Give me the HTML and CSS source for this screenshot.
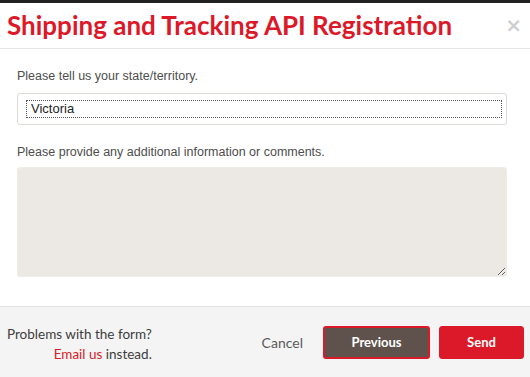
FILE: index.html
```html
<!DOCTYPE html>
<html lang="en">
<head>
    <meta charset="UTF-8">
    <meta name="viewport" content="width=device-width, initial-scale=1.0">
    <title>Shipping and Tracking API Registration</title>
    <link rel="stylesheet" href="styles.css">
</head>
<body>
    <div class="modal">
        <!-- Nagłówek okna -->
        <header class="modal-header">
            <h1 class="modal-title">Shipping and Tracking API Registration</h1>
            <span class="modal-close">&times;</span>
        </header>

        <!-- Formularz -->
        <form class="modal-body">
            <label class="field-label" for="state">Please tell us your state/territory.</label>
            <div class="field-input">
                <span class="field-value">Victoria</span>
            </div>

            <label class="field-label" for="comments">Please provide any additional information or comments.</label>
            <textarea class="field-textarea" id="comments"></textarea>
        </form>

        <!-- Stopka z przyciskami -->
        <footer class="modal-footer">
            <div class="help-text">
                <p>Problems with the form?</p>
                <p><a href="#" class="help-link">Email us</a> instead.</p>
            </div>
            <div class="actions">
                <a href="#" class="btn-cancel">Cancel</a>
                <button type="button" class="btn btn-previous">Previous</button>
                <button type="button" class="btn btn-send">Send</button>
            </div>
        </footer>
    </div>
</body>
</html>
```

FILE: styles.css
```css
:root {
    --ap-red: #dc1928;
    --ap-brown: #5f524d;
    --ap-text: #4d4d4d;
    --ap-sand: #ece9e4;
}

* {
    margin: 0;
    padding: 0;
    box-sizing: border-box;
}

body {
    font-family: "Liberation Sans", Arial, sans-serif;
    background: #222;
    padding-top: 3px;
    height: 100vh;
    overflow: hidden;
}

.modal {
    background: #fff;
    height: 374px;
    display: flex;
    flex-direction: column;
}

/* Nagłówek */
.modal-header {
    height: 46px;
    border-bottom: 1px solid #e5e5e5;
    display: flex;
    align-items: center;
    justify-content: space-between;
    padding: 0 8px 2px 7px;
}

.modal-title {
    font-family: Lato, "Open Sans", sans-serif;
    font-weight: 700;
    font-size: 26px;
    color: var(--ap-red);
}

.modal-close {
    font-family: "DejaVu Sans", sans-serif;
    font-size: 20px;
    font-weight: 700;
    color: #cfcfcf;
    line-height: 1;
}

/* Formularz */
.modal-body {
    flex: 1;
    padding: 20px 23px 0 17px;
    display: flex;
    flex-direction: column;
}

.field-label {
    font-size: 12.5px;
    color: var(--ap-text);
    margin-bottom: 10px;
}

.field-input {
    height: 32px;
    border: 1px solid #dedad5;
    border-radius: 3px;
    padding: 6px 4px 6px 8px;
    margin-bottom: 20px;
}

.field-value {
    display: block;
    height: 18px;
    border: 1px dotted #555;
    padding-left: 4px;
    font-size: 13px;
    line-height: 16px;
    color: #222;
}

.field-textarea {
    height: 110px;
    margin-top: -2px;
    background: var(--ap-sand);
    border: 1px solid #efece8;
    border-radius: 3px;
    resize: vertical;
    font-family: inherit;
}

/* Stopka */
.modal-footer {
    height: 71px;
    background: #f4f4f4;
    border-top: 1px solid #e2e2e2;
    display: flex;
    align-items: center;
    justify-content: space-between;
    padding: 0 6px 0 7px;
    font-family: Lato, "Open Sans", sans-serif;
}

.help-text {
    font-size: 13.5px;
    color: #3d3d3d;
    text-align: right;
    line-height: 20px;
    margin-top: 4px;
}

.help-link {
    color: var(--ap-red);
    text-decoration: none;
}

.actions {
    display: flex;
    align-items: center;
    gap: 9px;
}

.btn-cancel {
    font-size: 14px;
    color: #5a5a5a;
    text-decoration: none;
    margin-right: 11px;
}

.btn {
    height: 33px;
    border-radius: 3px;
    font-family: inherit;
    font-weight: 700;
    font-size: 13px;
    color: #fff;
    cursor: pointer;
}

.btn-previous {
    width: 107px;
    background: var(--ap-brown);
    border: 2px solid var(--ap-red);
}

.btn-send {
    width: 85px;
    background: var(--ap-red);
    border: 1px solid var(--ap-red);
}
```
